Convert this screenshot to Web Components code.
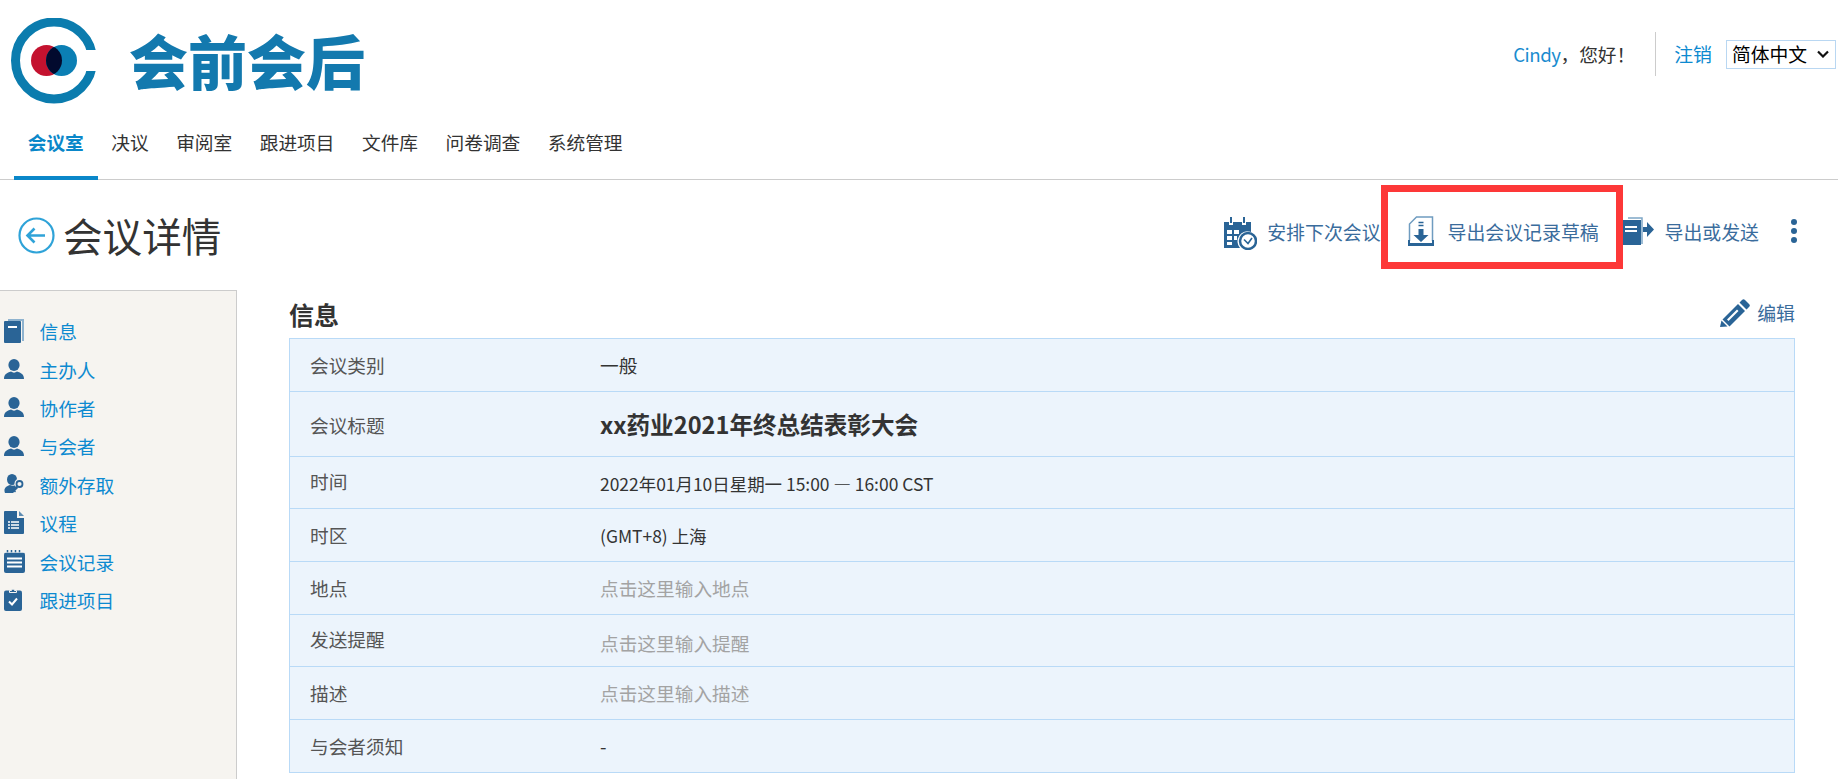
<!DOCTYPE html>
<html lang="zh"><head><meta charset="utf-8"><title>会议详情</title>
<style>
html,body{margin:0;height:779px;overflow:hidden;background:#fff}
body{font-family:"Noto Sans CJK SC","Noto Sans",sans-serif;color:#333;font-size:18.7px}
</style></head><body>
<app-shell></app-shell>
<script>
const ICONS={
book:[20,24,`<path fill="#8fb3cf" d="M4 0h16v22h-2V2H4z"/><rect y="2" width="17" height="22" rx="1" fill="#2a6496"/><rect x="4" y="7" width="9" height="2" fill="#fff"/>`],
person:[20,20,`<ellipse cx="10" cy="6" rx="5.6" ry="6" fill="#2a6496"/><path fill="#2a6496" d="M0 20c0-5 3-6 7-7.500 2 1.500 4 1.500 6 0 4 1.500 7 2.500 7 7.500z"/>`],
personkey:[21,20,`<ellipse cx="8" cy="5.500" rx="5" ry="5.500" fill="#2a6496"/><path fill="#2a6496" d="M1 19c-2-5 2-7 5-8 2 1 4 1 6 0l3 2-6 6z"/><circle cx="15.500" cy="9.500" r="5" fill="#f6f4f0"/><path fill="none" stroke="#2a6496" stroke-width="1.800" d="M8 17.500l6-5.500"/><circle cx="15.500" cy="10" r="3" fill="none" stroke="#2a6496" stroke-width="1.800"/><path stroke="#2a6496" stroke-width="1.500" d="M9.500 16l2 2"/>`],
doc:[20,23,`<path fill="#2a6496" d="M0 1a1 1 0 0 1 1-1h12v7h7v15a1 1 0 0 1-1 1H1a1 1 0 0 1-1-1z"/><path fill="#5e8cb2" d="M15 0l5 5h-5z"/><path stroke="#fff" stroke-width="1.300" d="M4 11h2M7 11h8M4 14h2M7 14h8M4 17h2M7 17h8"/>`],
notes:[21,23,`<rect y="2.500" width="21" height="20.500" rx="2" fill="#2a6496"/><path stroke="#2a6496" stroke-width="1.500" d="M3.500 0v4M7.500 0v4M11.500 0v4M15.500 0v4"/><path stroke="#fff" stroke-width="1.800" d="M3 8.500h15M3 12.500h15M3 16.500h15"/><path stroke="#fff" stroke-width="1" d="M1 2.500h19" opacity=".5"/>`],
clip:[18,23,`<rect y="2.500" width="18" height="20.500" rx="2" fill="#2a6496"/><path fill="#2a6496" stroke="#f6f4f0" d="M5.500 4.500V2.500h2a1.500 1.500 0 0 1 3 0h2v2z"/><path fill="none" stroke="#fff" stroke-width="2" d="M5 13.500l3 3 5-6"/>`],
calendar:[33,33,`<path fill="#2a6496" d="M0 5h5v3h4V5h9v3h4V5h5v10a10 10 0 0 0-11 16H0z"/><path stroke="#2a6496" stroke-width="2" d="M7 0v6M20 0v6"/><path fill="#fff" d="M3 13h5v4H3zM10 13h5v4h-5zM3 19h5v4H3zM10 19h3v4h-3zM3 25h5v3H3z"/><circle cx="24" cy="24" r="8" fill="#fff" stroke="#2a6496" stroke-width="2.500"/><path fill="none" stroke="#2a6496" stroke-width="1.600" d="M20 22.500l4 4L28 21"/>`],
download:[26,30,`<path fill="none" stroke="#6f9cc0" stroke-width="1.500" d="M1.500 25V8L8.500 1H24.500V25"/><path fill="#2a6496" d="M10.500 13h5v6h5l-7.500 7-7.500-7h5z"/><path stroke="#2a6496" stroke-width="1.500" d="M10.500 6.500h5M10.500 9.500h5"/><path fill="#2a6496" d="M0 24h2v3h22v-3h2v6H0z"/>`],
exportdoc:[31,28,`<path fill="none" stroke="#7ea6c6" stroke-width="1.500" d="M5 1h14v26"/><rect y="3" width="18" height="25" fill="#2a6496"/><path stroke="#fff" stroke-width="2" d="M2 10h12M2 14h12"/><path fill="#2a6496" d="M20 10h4V5l7 7.500-7 7.500v-5h-4z"/>`],
pencil:[30,28,`<path fill="#2a6496" d="M22 1a2 2 0 0 1 3 0l4 4a2 2 0 0 1 0 3l-2.500 2.500-7-7z"/><path fill="#2a6496" d="M18 5l7 7-15.500 15.500-7-7z"/><path fill="#fff" d="M17 10.500l1.500 1.500-10 10L7 20.500z"/><path fill="#2a6496" d="M1.500 21.500l6 6L0 28z"/>`]
};
const def=(n,html,init)=>customElements.define(n,class extends HTMLElement{
 constructor(){super();this.attachShadow({mode:'open'}).innerHTML=html}
 connectedCallback(){init&&init(this)}
});
def('app-icon','',el=>{
 const [w,h,b]=ICONS[el.getAttribute('name')];
 el.shadowRoot.innerHTML=`<style>:host{display:block;line-height:0}svg{display:block}</style><svg xmlns="http://www.w3.org/2000/svg" width="${w}" height="${h}" viewBox="0 0 ${w} ${h}">${b}</svg>`;
});
def('app-logo',`<style>
:host{display:flex;align-items:flex-start}
svg{display:block;margin:18px 0 0 11px}
span{font-size:59px;font-weight:900;color:#1379ae;line-height:1;margin:30px 0 0 32px;white-space:nowrap}
</style><svg width="86" height="86" viewBox="11 18 86 86"><defs><clipPath id="c"><circle cx="61.500" cy="60.500" r="15.500"/></clipPath></defs>
<circle cx="54" cy="60.500" r="38.500" fill="none" stroke="#0b7cae" stroke-width="9"/><rect x="70" y="50" width="30" height="21" fill="#fff"/>
<circle cx="46.500" cy="60.500" r="15.500" fill="#c4122f"/><circle cx="61.500" cy="60.500" r="15.500" fill="#0b7fb4"/><circle cx="46.500" cy="60.500" r="15.500" fill="#020a2e" clip-path="url(#c)"/></svg><span>会前会后</span>`);
def('user-bar',`<style>
:host{display:flex;align-items:center;height:44px;margin-top:32px;padding-right:2px;font-size:18.7px;line-height:1.2}
.hi{margin-right:20px;color:#333;white-space:nowrap}
.hi b{font-weight:400;color:#1a8ccf;letter-spacing:-.5px}
.sep{width:1px;height:44px;background:#ccc}
a{color:#0d8ad0;margin:0 14px 0 18px;white-space:nowrap;font-size:18.9px}
.s{position:relative;display:block;width:110px;height:29px}
select{appearance:none;-webkit-appearance:none;display:block;width:110px;height:29px;box-sizing:border-box;border:1.500px solid #b9d7f2;background:#fff;color:#000;font:inherit;font-size:18.8px;line-height:24px;padding:0 0 1px 5px;border-radius:0;margin:0;outline:0}
.s svg{position:absolute;right:7px;top:10px;pointer-events:none}
</style><span class="hi"><b>Cindy</b>，您好！</span><span class="sep"></span><a>注销</a><span class="s"><select><option>简体中文</option></select><svg width="12" height="8" viewBox="0 0 12 8"><path fill="none" stroke="#111" stroke-width="2.200" d="M1 1.500l5 5 5-5"/></svg></span>`);
def('app-header',`<style>:host{display:flex;justify-content:space-between;height:118px}</style><slot></slot>`);
def('nav-tab',`<style>
:host{display:flex;align-items:center;height:46px;padding:0 13.750px 12px;border-bottom:4px solid transparent;white-space:nowrap;color:#333}
:host([active]){border-color:#0a87c9;color:#0a87c9;font-weight:700}
</style><slot></slot>`);
def('app-nav',`<style>:host{display:flex;height:61px;padding-left:14px;border-bottom:1px solid #ccc;font-size:18.700px}</style><slot></slot>`);
def('tool-action',`<style>
:host{display:flex;align-items:center;gap:var(--gap,10px);color:#3a6c9c;white-space:nowrap;font-size:18.900px;box-sizing:border-box;height:84px;padding-top:8px}
:host([marked]){width:242px;border:7px solid #fd3838;padding-left:20px;gap:14px}
</style><slot></slot>`);
def('page-title',`<style>
:host{display:flex;align-items:flex-start;height:110px}
.l{display:flex;align-items:center;height:76px;padding-left:18px;gap:8px;font-size:39.600px;color:#333;line-height:1;white-space:nowrap;margin-top:17px}
.t{display:flex;align-items:center;margin-left:auto;margin-top:5px;padding-right:41px}
svg{display:block}
.dots{width:6px;margin-left:32px;display:flex;flex-direction:column;gap:3px;padding-top:8px}
.dots i{display:block;width:6px;height:6px;border-radius:50%;background:#2a6496}
</style><div class="l"><svg width="37" height="37" viewBox="0 0 37 37"><circle cx="18.500" cy="18.500" r="17" fill="none" stroke="#2fa3d8" stroke-width="2.200"/><path fill="none" stroke="#2fa3d8" stroke-width="2.600" d="M27 18.500H10M16.500 11.500l-7 7 7 7"/></svg><span>会议详情</span></div>
<div class="t"><slot></slot><div class="dots"><i></i><i></i><i></i></div></div>`);
def('side-item',`<style>
:host{display:flex;align-items:center;height:38.400px;color:#0d8ad0;white-space:nowrap}
.i{width:39.500px;padding-left:4px;box-sizing:border-box;flex:none}
</style><div class="i"><slot name="icon"></slot></div><slot></slot>`);
def('side-nav',`<style>
:host{display:block;flex:none;width:237px;box-sizing:border-box;height:489px;background:#f6f4f0;border-top:1px solid #ccc;border-right:1px solid #ccc;padding-top:20.500px;font-size:18.7px}
</style><slot></slot>`);
def('info-row',`<style>
:host{display:flex;align-items:center;box-sizing:border-box;border-bottom:1px solid #b9daf7;padding-left:20px;color:#333;font-size:18.7px;line-height:1.2}
.k{width:290px;flex:none;color:#555;padding-bottom:var(--kb,0);padding-top:var(--kt,0)}
.v{padding-top:var(--vt,0);padding-bottom:var(--vb,0)}
</style><div class="k"><slot name="k"></slot></div><div class="v"><slot></slot></div>`);
def('info-table',`<style>
:host{display:block;background:#ecf4fc;border:1px solid #b9daf7;border-bottom:0}
</style><slot></slot>`);
def('info-panel',`<style>
:host{display:block;margin-left:52px;width:1506px}
.h{display:flex;justify-content:space-between;align-items:center;height:48px}
h2{margin:0;font-size:25px;font-weight:700;color:#333;line-height:1}
.e{display:flex;align-items:center;gap:7px;color:#3a6c9c;font-size:18.900px}
.e span{padding-bottom:3px}
.e app-icon{margin-bottom:3px}
</style><div class="h"><h2>信息</h2><div class="e"><app-icon name="pencil"></app-icon><span>编辑</span></div></div><slot></slot>`);
def('app-shell',`<style>
:host{display:block;height:779px;overflow:hidden}
.m{display:flex;align-items:flex-start}
.p{color:#a3a3a3}
.big{font-size:23.600px;font-weight:700;color:#333}
.sm{font-size:17.450px}
</style>
<app-header><app-logo></app-logo><user-bar></user-bar></app-header>
<app-nav><nav-tab active>会议室</nav-tab><nav-tab>决议</nav-tab><nav-tab>审阅室</nav-tab><nav-tab>跟进项目</nav-tab><nav-tab>文件库</nav-tab><nav-tab>问卷调查</nav-tab><nav-tab>系统管理</nav-tab></app-nav>
<page-title>
<tool-action><app-icon name="calendar" style="margin-top:4px"></app-icon>安排下次会议</tool-action>
<tool-action marked><app-icon name="download"></app-icon>导出会议记录草稿</tool-action>
<tool-action style="--gap:11px"><app-icon name="exportdoc"></app-icon>导出或发送</tool-action>
</page-title>
<div class="m">
<side-nav>
<side-item><app-icon slot="icon" name="book"></app-icon>信息</side-item>
<side-item><app-icon slot="icon" name="person"></app-icon>主办人</side-item>
<side-item><app-icon slot="icon" name="person"></app-icon>协作者</side-item>
<side-item><app-icon slot="icon" name="person"></app-icon>与会者</side-item>
<side-item><app-icon slot="icon" name="personkey"></app-icon>额外存取</side-item>
<side-item><app-icon slot="icon" name="doc"></app-icon>议程</side-item>
<side-item><app-icon slot="icon" name="notes"></app-icon>会议记录</side-item>
<side-item><app-icon slot="icon" name="clip"></app-icon>跟进项目</side-item>
</side-nav>
<info-panel><info-table>
<info-row style="height:53px"><span slot="k">会议类别</span>一般</info-row>
<info-row style="height:65px;--kt:2px"><span slot="k">会议标题</span><span class="big">xx药业2021年终总结表彰大会</span></info-row>
<info-row style="height:52px;--kb:3px;--vt:1px"><span slot="k">时间</span><span class="sm">2022年01月10日星期一 15:00 — 16:00 CST</span></info-row>
<info-row style="height:53px"><span slot="k">时区</span><span class="sm">(GMT+8) 上海</span></info-row>
<info-row style="height:53px"><span slot="k">地点</span><span class="p">点击这里输入地点</span></info-row>
<info-row style="height:52px;--kb:3px;--vt:5px"><span slot="k">发送提醒</span><span class="p">点击这里输入提醒</span></info-row>
<info-row style="height:53px"><span slot="k">描述</span><span class="p">点击这里输入描述</span></info-row>
<info-row style="height:53px"><span slot="k">与会者须知</span>-</info-row>
</info-table></info-panel>
</div>`);
</script>
</body></html>
